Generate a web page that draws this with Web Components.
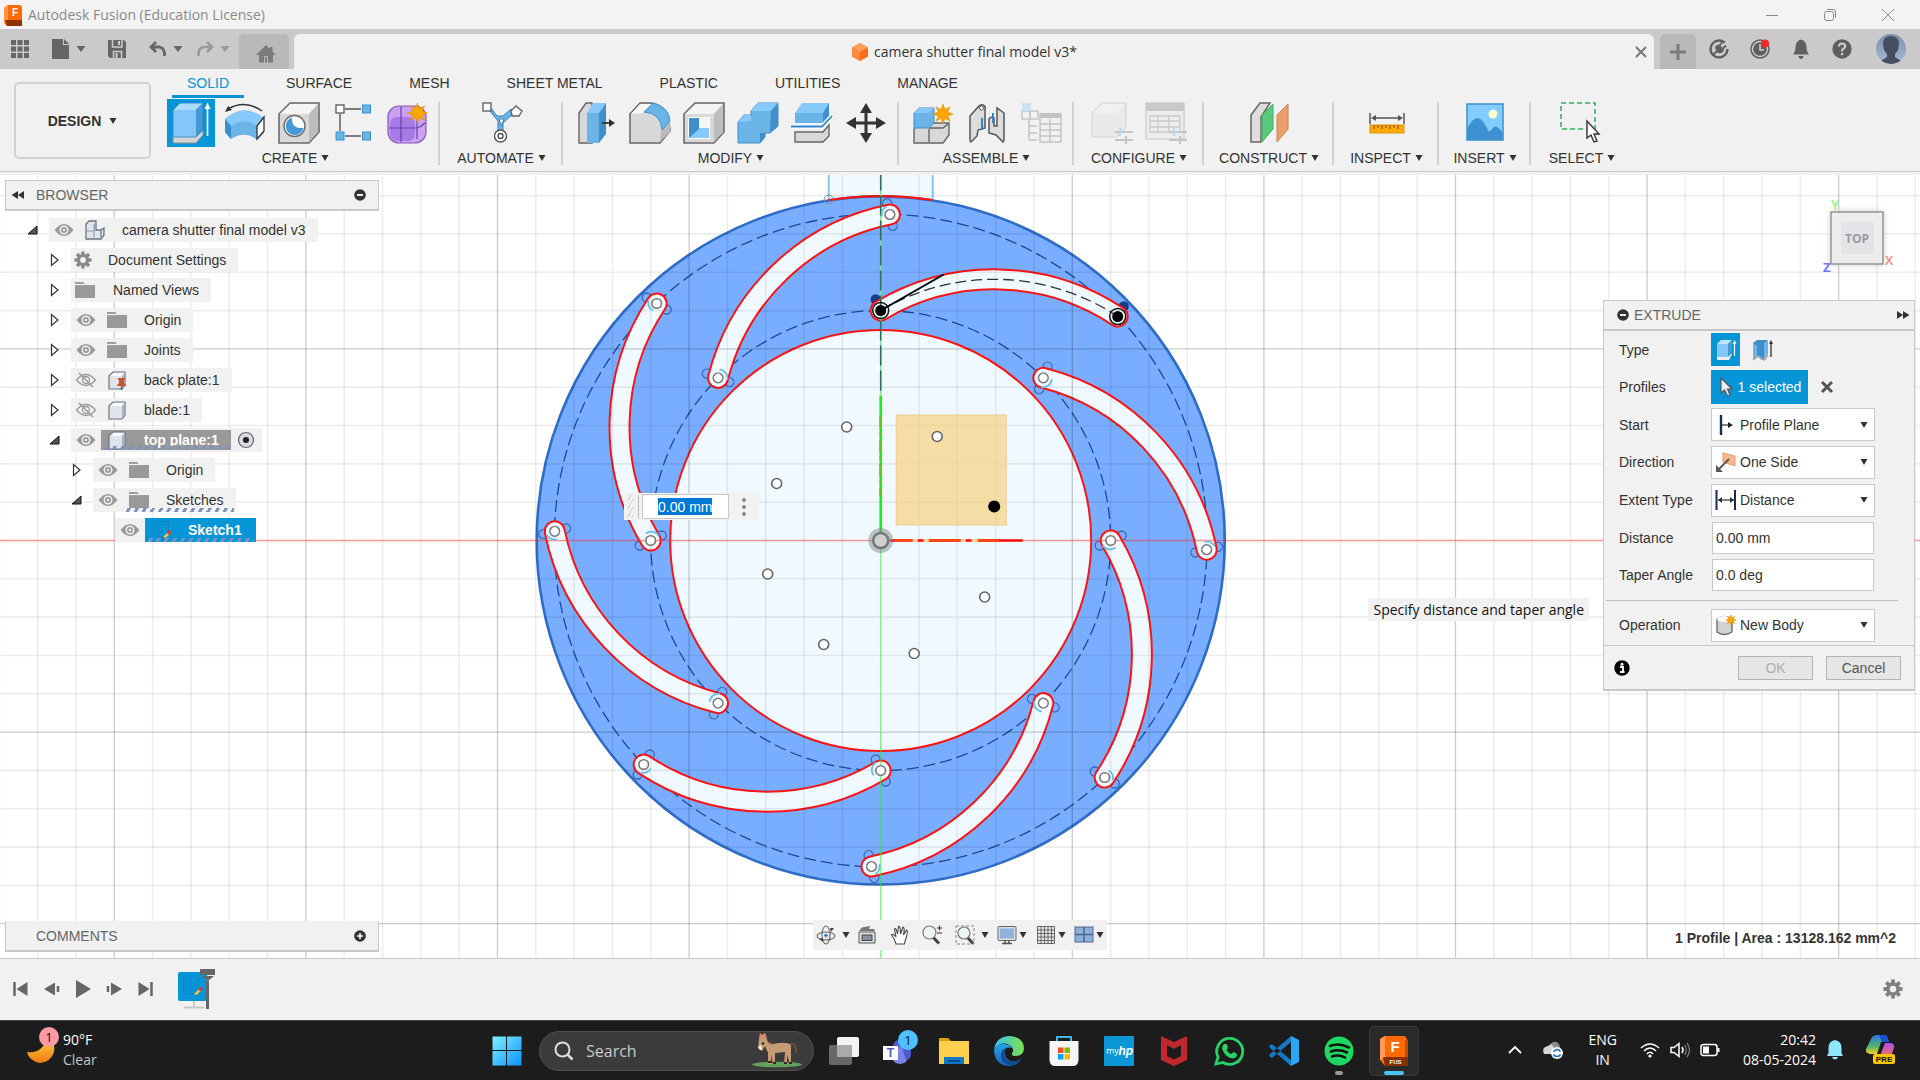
<!DOCTYPE html>
<html lang="en">
<head>
<meta charset="utf-8">
<title>Autodesk Fusion (Education License)</title>
<style>
html,body{margin:0;height:100%}
body{font:14px/20px "Liberation Sans",Arial,sans-serif;color:#333;background:#f1f1f1;overflow:hidden}
fx-app{height:100vh}
</style>
</head>
<body>
<fx-app></fx-app>
<script>
const star=(cx,cy,r,q=r*.5,n=8)=>{let p='';for(let i=0;i<n*2;i++){const a=i*Math.PI/n-Math.PI/2,k=i%2?q:r;p+=`${(cx+Math.cos(a)*k).toFixed(1)},${(cy+Math.sin(a)*k).toFixed(1)} `}return `<polygon points="${p}" fill="#f9a602" stroke="#e08f00" stroke-width=".6"/>`};
const gear=(c,r,col,hole)=>{let t='';for(let i=0;i<8;i++)t+=`<rect x="${c-r*.2}" y="${c-r}" width="${r*.4}" height="${r*.6}" transform="rotate(${i*45} ${c} ${c})"/>`;return `<g fill="${col}">${t}<circle cx="${c}" cy="${c}" r="${r*.72}"/></g><circle cx="${c}" cy="${c}" r="${r*.34}" fill="${hole}"/>`};
const cube='<path d="M4 15 15 4H44V33L34 44H4Z" fill="#d8d8d8" stroke="#6b6b6b" stroke-width="1.6"/><path d="M5 15 15.500 5H43L34 15Z" fill="#f4f4f4"/><path d="M34 15 43 5V33L34 43Z" fill="#bdbdbd"/>';
const sliders='<g stroke="#c4c4c4" stroke-width="2" fill="none"><path d="M27 33H45M27 41H45M38 37V45"/></g><path d="M32 28V37" stroke="#b5dcf5" stroke-width="2"/>';
const smallCube='<path d="M2 6 6 2H18V15L15 19H2Z" fill="#dfe4ec" stroke="#6d7480" stroke-width="1.200"/><path d="M3 6 6.500 3H17.500L15 6Z" fill="#f8fafc"/><path d="M15 6 17.500 3V15L15 18Z" fill="#aab2c0"/>';
const ICONS={
app:[22,22,'<path d="M2 4 6 1H18L20 3V20L18 22H5L2 19Z" fill="#ff6b00"/><path d="M2 4 6 1V17L2 19Z" fill="#ff9448"/><path d="M3 16H20V22H5Z" fill="#8f3200"/><text x="13" y="12" font-size="10" font-weight="700" fill="#fff" text-anchor="middle">F</text>'],
min:[16,16,'<path d="M2 8.500H14" stroke="#888" />'],
restore:[16,16,'<rect x="2.500" y="4.500" width="9" height="9" rx="2" fill="none" stroke="#888"/><path d="M5 2.500H11Q13.500 2.500 13.500 5V11" fill="none" stroke="#888"/>'],
close:[16,16,'<path d="M2 2 14 14M14 2 2 14" stroke="#888" />'],
closetab:[16,16,'<path d="M3 3 13 13M13 3 3 13" stroke="#777" stroke-width="2"/>'],
grid:[20,20,'<g fill="#666"><rect x="1" y="1" width="5" height="5"/><rect x="7.500" y="1" width="5" height="5"/><rect x="14" y="1" width="5" height="5"/><rect x="1" y="7.500" width="5" height="5"/><rect x="7.500" y="7.500" width="5" height="5"/><rect x="14" y="7.500" width="5" height="5"/><rect x="1" y="14" width="5" height="5"/><rect x="7.500" y="14" width="5" height="5"/><rect x="14" y="14" width="5" height="5"/></g>'],
file:[20,20,'<path d="M1 0H12V6H18V20H1Z" fill="#666"/><path d="M13 0 18 5H13Z" fill="#666"/>'],
save:[20,20,'<path d="M1 1H17L19 3V19H3L1 17Z" fill="#666"/><path d="M5.500 1V8H15V1M6.500 19V12.500H14.500V19" fill="none" stroke="#cbcbcb" stroke-width="1.500"/><rect x="11" y="2" width="2" height="4" fill="#cbcbcb"/><rect x="8.500" y="14" width="2" height="5" fill="#cbcbcb"/>'],
undo:[20,20,'<path d="M8 3 3 8 8 13M3.500 8H11Q17 8.500 16.500 17" fill="none" stroke="#666" stroke-width="2.800"/>'],
redo:[20,20,'<path d="M12 3 17 8 12 13M16.500 8H9Q3 8.500 3.500 17" fill="none" stroke="#999" stroke-width="2.500"/>'],
down:[10,10,'<path d="M0.500 2H9.500L5 8Z" fill="#666"/>'],
down2:[10,10,'<path d="M0.500 2H9.500L5 8Z" fill="#999"/>'],
drop:[8,8,'<path d="M0.500 1H7.500L4 7Z" fill="#333"/>'],
home:[20,20,'<path d="M10 1 0 11H3V18.500H8V12H12V18.500H17V11H20L16.500 7.500V3H14V5Z" fill="#7b7b7b"/><rect x="9.200" y="13" width="1.800" height="5.500" fill="#7b7b7b"/>'],
doc3d:[20,20,'<path d="M10 1 18 5.500V14.500L10 19 2 14.500V5.500Z" fill="#ff6a13"/><path d="M10 1 18 5.500 10 10 2 5.500Z" fill="#ff9c5e"/><path d="M10 10V19L2 14.500V5.500Z" fill="#f98943"/>'],
plus:[20,20,'<path d="M10 2V18M2 10H18" stroke="#7b7b7b" stroke-width="3"/>'],
ext:[20,20,'<circle cx="10" cy="10" r="8.500" fill="none" stroke="#5f5f5f" stroke-width="2.400" stroke-dasharray="46 7"/><path d="M3.500 16.500 8 12" stroke="#5f5f5f" stroke-width="2"/><path d="M6 9Q7 5 11 6L15 11Q13 15 9 14Z" fill="#5f5f5f"/><path d="M10 7 13 3.500M13.500 10 17 6.500" stroke="#5f5f5f" stroke-width="1.800"/>'],
clock:[20,20,'<circle cx="10" cy="10" r="9" fill="none" stroke="#5f5f5f" stroke-width="1.500"/><circle cx="10" cy="10" r="6.800" fill="#5f5f5f"/><path d="M10 5V11H14" stroke="#ccc" stroke-width="1.600" fill="none"/><circle cx="15" cy="4.500" r="4" fill="#ee2a2a"/>'],
bell:[20,20,'<path d="M10 0.500Q15.500 2 15.500 8 15.500 13 18 15.500H2Q4.500 13 4.500 8 4.500 2 10 .5ZM7.500 17H12.500Q12 20 10 20 8 20 7.500 17Z" fill="#5f5f5f"/>'],
help:[20,20,'<circle cx="10" cy="10" r="9.700" fill="#5f5f5f"/><path d="M7 7.500Q7 4.500 10 4.500 13.200 4.500 13.200 7.300 13.200 9 11 10 10 10.500 10 12.500" fill="none" stroke="#ccc" stroke-width="2.200"/><rect x="8.900" y="14" width="2.300" height="2.300" fill="#ccc"/>'],
avatar:[30,30,'<defs><clipPath id="c"><circle cx="15" cy="15" r="15"/></clipPath><linearGradient id="g" x2="0" y2="1"><stop stop-color="#7c8ea8"/><stop offset="1" stop-color="#a7b9d6"/></linearGradient></defs><g clip-path="url(#c)"><rect width="30" height="30" fill="url(#g)"/><path d="M7 10Q7 2 15 2 23 2 23 10L22 16Q21 18 19 20V23L27 28V30H3V28L11 23V20Q9 18 8 16Z" fill="#454f5f"/></g>'],
extrude:[48,48,'<path d="M6 38 13 31H36V36L29 44H6Z" fill="#d5d5d5" stroke="#8c8c8c"/><path d="M6 11V38H29V11Z" fill="#84c6f8"/><path d="M6 11 13 4H36L29 11Z" fill="#abdcff"/><path d="M29 11 36 4V31L29 38Z" fill="#4598d6"/><path d="M6 11V38H29L36 31V4H13Z" fill="none" stroke="#2c83c3" stroke-width=".8"/><path d="M40.500 37V8" stroke="#fff" stroke-width="1.600"/><path d="M37.500 10 40.500 3.500 43.500 10Z" fill="#fff"/>'],
revolve:[48,48,'<path d="M4 20Q23 4 43 20V34L36 41Q24 31 10 40L4 33Z" fill="#6ab4e8"/><path d="M4 20Q23 3 43 19L36 27Q23 18 10 27Z" fill="#86c9fa"/><path d="M4 20 10 27V40L4 33Z" fill="#3b8dcc"/><path d="M36 27 43 18V32L36 40Z" fill="#fff" stroke="#333" stroke-width="1.300"/><path d="M41 12Q24 0 7 10" fill="none" stroke="#333" stroke-width="1.500"/><path d="M4 13 7 7 11 11Z" fill="#333"/>'],
hole:[48,48,cube+'<circle cx="19.500" cy="27" r="10.500" fill="#fff" stroke="#6b6b6b" stroke-width="1.400"/><path d="M17 18.500A9 9 0 1 0 28.500 29Q16 30 17 18.500Z" fill="#4598d6"/>'],
pattern:[48,48,'<path d="M16 10H32M11 15V32M16 37H32" stroke="#555" stroke-width="1.400"/><rect x="7" y="6" width="8" height="8" fill="#fff" stroke="#555" stroke-width="1.300"/><g fill="#6ab4e8" stroke="#3b8dcc"><rect x="33.500" y="6" width="8" height="8"/><rect x="7" y="33" width="8" height="8"/><rect x="33.500" y="33" width="8" height="8"/></g>'],
form:[48,48,'<rect x="5" y="7" width="38" height="37" rx="11" fill="#caa2f2" stroke="#8659bd" stroke-width="1.200"/><rect x="7" y="18" width="25" height="24" rx="7" fill="#a77ae6"/><path d="M18 8V43M6 29H34Q38 28 42 24M34 16V40" stroke="#6d3fa8" stroke-width="1.200" fill="none"/>'+star(34.5,14,10)],
automate:[48,48,'<path d="M11 11 20 22V34H25V24L37 13 33 10 25 17H19L13 9Z" fill="#6ab4e8" stroke="#3b7fb5"/><path d="M21 20H26L23.500 27Z" fill="#fff" stroke="#3b7fb5"/><rect x="5" y="4" width="8" height="8" fill="#fff" stroke="#666" stroke-width="1.400"/><path d="M38 7 44 12 41 17 34 17 33 12Z" fill="#fff" stroke="#666" stroke-width="1.400"/><circle cx="22.500" cy="37" r="6" fill="#fff" stroke="#555" stroke-width="1.400"/><circle cx="22.500" cy="37" r="2.500" fill="none" stroke="#555" stroke-width="1.400"/>'],
press:[48,48,'<path d="M7 14 14 4H20V44H7Z" fill="#d8d8d8" stroke="#666" stroke-width="1.400"/><path d="M15 14V44H27V14Z" fill="#6ab4e8"/><path d="M15 14 21 4H34L27 14Z" fill="#86c9fa"/><path d="M27 14 34 4V35L27 44Z" fill="#3f8fcb"/><path d="M30 24H39" stroke="#333" stroke-width="1.800"/><path d="M37 20 43 24 37 28Z" fill="#333"/>'],
fillet:[48,48,'<path d="M4 15 14 4H26Q43 7 44 32L34 44H4Z" fill="#d8d8d8" stroke="#666" stroke-width="1.500"/><path d="M5 15 14 5H26L17 14Z" fill="#f6f6f6"/><path d="M35 32 44 22V33L34 43Z" fill="#bbb"/><path d="M18 13 27 4Q43 8 44 22L36 31Q35 14 18 13Z" fill="#6ab4e8" stroke="#3f8fcb"/>'],
shell:[48,48,cube+'<rect x="8" y="18" width="22" height="22" fill="#fff"/><rect x="9" y="19" width="20" height="20" fill="#86c9fa"/><path d="M9 19H19V30L9 39Z" fill="#3f8fcb"/><path d="M19 19H29V29H19Z" fill="#f4f4f4"/>'],
combine:[48,48,'<path d="M4 23 10 16H17V12L24 4H44V27L36 34H31V38L26 44H4Z" fill="#6ab4e8" stroke="#3f8fcb"/><path d="M17 12 24 4H44L37 12ZM4 23 10 16H17V22Z" fill="#86c9fa"/><path d="M37 12 44 4V27L36 34ZM26 34H31V38L26 44Z" fill="#3f8fcb"/>'],
split:[48,48,'<path d="M7 33H35L41 26V37L35 43H7Z" fill="#d8d8d8" stroke="#666" stroke-width="1.400"/><path d="M7 14H35V24H7Z" fill="#6ab4e8"/><path d="M7 14 14 4H41L35 14Z" fill="#86c9fa"/><path d="M35 14 41 4V17L35 24Z" fill="#3f8fcb"/><path d="M3 27.500H34L44 17" stroke="#fff" stroke-width="4" fill="none"/><path d="M3 27.500H34L44 17" stroke="#2f86d0" stroke-width="1.800" fill="none"/>'],
move:[48,48,'<path d="M24 9V39M9 24H39" stroke="#333" stroke-width="3"/><path d="M24 4 30 14H18ZM24 44 18 34H30ZM4 24 14 18V30ZM44 24 34 30V18Z" fill="#333"/>'],
newcomp:[48,48,'<path d="M5 30 12 24H40V36L34 44H5Z" fill="#d8d8d8" stroke="#666" stroke-width="1.400"/><path d="M20 30V43M20 29H34L39 25" stroke="#666" stroke-width="1.400" fill="none"/><path d="M5 14 10 9H25V24L20 29H5Z" fill="#6ab4e8" stroke="#3f8fcb"/><path d="M5 14 10 9H25L20 14Z" fill="#86c9fa"/>'+star(34,15,10)],
joint:[48,48,'<path d="M7 17 15 8Q17 5 20 6 23 7 22 11V29L15 31 14 37 8 43Q7 43 7 41Z" fill="#ddd" stroke="#555" stroke-width="1.500"/><circle cx="18.500" cy="9" r="2" fill="#fff" stroke="#555"/><path d="M41 14 34 9V27H31V19Q28 17 26 20V34L33 36 40 43 41 41Z" fill="#ddd" stroke="#555" stroke-width="1.500"/><path d="M19 19V31M30 14V24" stroke="#2f86d0" stroke-width="2"/>'],
bom:[48,48,'<g fill="none" stroke="#c2c2c2" stroke-width="1.400"><rect x="5" y="12" width="8" height="8"/><rect x="13" y="12" width="8" height="8"/><path d="M12 21V41M12 27H20M12 34H20M12 41H20"/><rect x="23" y="15" width="21" height="28"/><path d="M23 25H44M23 31H44M23 37H44M33 20V43"/></g><rect x="5" y="4" width="9" height="8" fill="#c9e3f5"/><rect x="23" y="14" width="21" height="5" fill="#c2c2c2"/>'],
conf1:[48,48,'<path d="M4 14 14 4H38V28L29 38H4Z" fill="#e9e9e9" stroke="#d6d6d6" stroke-width="1.200"/><path d="M5 14 14 5H37L29 14Z" fill="#f1f1f1"/>'+sliders],
conf2:[48,48,'<rect x="4" y="4" width="38" height="36" fill="#ededed" stroke="#cfcfcf" stroke-width="1.400"/><rect x="4" y="4" width="38" height="8" fill="#c9c9c9"/><path d="M8 17H38V33H8ZM8 22H38M8 28H38M16 17V33M27 17V33" fill="none" stroke="#c9c9c9" stroke-width="1.300"/>'+sliders],
construct:[48,48,'<path d="M6 16 15 4H25L16 18V43H6Z" fill="#ddd" stroke="#666" stroke-width="1.500"/><path d="M17 16 28 5V30L17 43Z" fill="#5ac97e" stroke="#3fae63"/><path d="M32 16 43 5V30L32 43Z" fill="#e99f6c" stroke="#cf8450"/>'],
inspect:[48,48,'<path d="M7 14V25M41 14V25M10 19H38" stroke="#555" stroke-width="1.500"/><path d="M8 19 13 16V22ZM40 19 35 16V22Z" fill="#555"/><rect x="7" y="26" width="34" height="8" fill="#fca70a" stroke="#e89400"/><path d="M11 26V30M15 26V29M19 26V30M23 26V29M27 26V30M31 26V29M35 26V30" stroke="#7a5000"/>'],
insert:[48,48,'<rect x="6" y="5" width="36" height="36" fill="#82ccff" stroke="#3c8fcd" stroke-width="1.500"/><path d="M6 30Q12 18 17 19 22 20 28 33L33 28Q36 26 42 34V41H6Z" fill="#3c92d0"/><circle cx="32" cy="15" r="4.500" fill="#fdfbd0"/>'],
select:[48,48,'<rect x="3" y="4" width="34" height="26" fill="none" stroke="#2fae5b" stroke-width="1.500" stroke-dasharray="5 3"/><path d="M29 22V39L33 36 36 43 39 42 36 35H41Z" fill="#fff" stroke="#333" stroke-width="1.400"/>'],
eye:[20,14,'<path d="M0.500 7Q10 -5 19.500 7 10 19 .5 7Z" fill="#999"/><circle cx="10" cy="7" r="4.500" fill="#f1f1f1"/><circle cx="10" cy="7" r="3" fill="#999"/><circle cx="10" cy="7" r="1.200" fill="#f1f1f1"/>'],
eyeoff:[20,14,'<path d="M0.500 7Q10 -4 19.500 7 10 18 .5 7Z" fill="none" stroke="#999" stroke-width="1.300"/><circle cx="10" cy="7" r="3.500" fill="none" stroke="#999" stroke-width="1.300"/><path d="M3 0 17 14" stroke="#999" stroke-width="1.500"/>'],
folder:[22,18,'<path d="M1 1H9L11 3V4H21V17H1Z" fill="#999"/><path d="M1 3.500H11" stroke="#f1f1f1" stroke-width="1.200"/>'],
gear:[18,18,gear(9,8.5,'#888','#f1f1f1')],
biggear:[20,20,gear(10,9.5,'#808080','#f1f1f1')],
asm:[20,20,'<path d="M1 4 4 1H11V10H16L19 8V15L16 19H1Z" fill="#dfe4ec" stroke="#6d7480" stroke-width="1.300"/><path d="M1 11H9V19" stroke="#8f97a5" fill="none"/><path d="M9.500 4V11M16 11V18" stroke="#9aa4b5" stroke-width="2"/>'],
body:[20,20,smallCube],
pinned:[20,20,smallCube+'<path d="M11 8H18V10H17V13L19.500 16H9.500L12 13V10H11Z" fill="#c9532c"/><path d="M14.500 16V20" stroke="#555" stroke-width="1.300"/>'],
sketch:[20,20,'<rect x="2.500" y="1.500" width="15" height="15" rx="1.500" fill="none" stroke="#1583bd" stroke-width="1.100"/><path d="M6 5H9M6 6V10Q7 14 11 12L14 5" fill="none" stroke="#1583bd"/><path d="M12 17 17 12 19 14 14.500 18Z" fill="#f7c343"/><circle cx="18" cy="12.500" r="2" fill="#e4323b"/><path d="M11 19.500 12 17 14 18.500Z" fill="#555"/>'],
open:[12,12,'<path d="M10 2V10H1Z" fill="#555" stroke="#111"/>'],
closed:[12,12,'<path d="M2.500 .5V11.500L9 6Z" fill="#fff" stroke="#333" stroke-width="1.200"/>'],
radio:[18,18,'<circle cx="9" cy="9" r="7.500" fill="#d7dbe2" stroke="#666" stroke-width="1.200"/><circle cx="9" cy="9" r="3" fill="#222"/>'],
rew:[14,10,'<path d="M0.500 5 7 1V9ZM7 5 13 1V9Z" fill="#333"/>'],
ffw:[14,10,'<path d="M13.500 5 7 1V9ZM7 5 1 1V9Z" fill="#333"/>'],
minus:[12,12,'<circle cx="6" cy="6" r="5.800" fill="#333"/><path d="M3 6H9" stroke="#fff" stroke-width="1.800"/>'],
add:[12,12,'<circle cx="6" cy="6" r="5.800" fill="#333"/><path d="M3 6H9M6 3V9" stroke="#fff" stroke-width="1.600"/>'],
info:[16,16,'<circle cx="8" cy="8" r="7.700" fill="#000"/><circle cx="8" cy="4.300" r="1.500" fill="#fff"/><path d="M6 7H9V12H10.500M6 12H10" stroke="#fff" stroke-width="1.800" fill="none"/>'],
typ1:[24,24,'<path d="M3 19 6 16H18L15 22H3Z" fill="#eee"/><path d="M3 6V19H14V6Z" fill="#84c6f8"/><path d="M3 6 7 2H18L14 6Z" fill="#c0e4ff"/><path d="M14 6 18 2V15L14 19Z" fill="#4598d6"/><path d="M20.500 18V4" stroke="#fff" stroke-width="1.200"/><path d="M18.500 6 20.500 2 22.500 6Z" fill="#fff"/>'],
typ2:[24,24,'<path d="M3 5 7 2H18L14 6V19L16 22H12L8 19 3 22Z" fill="#3f8fcb"/><path d="M3 5 7 8V18L3 21ZM14 6 18 2V16L14 20Z" fill="#6ab4e8"/><path d="M3 22 8 18 14 22 18 17" fill="none" stroke="#aaa" stroke-width="1.500"/><path d="M21 19V4" stroke="#333" stroke-width="1.300"/><path d="M19 6 21 2 23 6Z" fill="#333"/>'],
cursor:[16,22,'<path d="M3 2V17L6.500 14 9.500 20 12 19 9.500 13H14Z" fill="#eee" stroke="#555" stroke-width="1.200"/>'],
x:[14,14,'<path d="M2 2 12 12M12 2 2 12" stroke="#555" stroke-width="3"/>'],
start:[24,24,'<path d="M7 2V22" stroke="#142e57" stroke-width="2.400"/><path d="M8 12H15" stroke="#333" stroke-width="1.200"/><path d="M14 9 19 12 14 15Z" fill="#222"/>'],
dir:[24,24,'<path d="M9 3 21 6V16L9 12Z" fill="#f7b78d" stroke="#e59a69"/><path d="M15 9 4 20" stroke="#555" stroke-width="1.800"/><path d="M2 15V22H9Z" fill="#555"/>'],
dist:[24,24,'<path d="M2.500 2V22M21 2V22" stroke="#142e57" stroke-width="2"/><path d="M4 12H20" stroke="#333" stroke-width="1.200"/><path d="M4 12 8 9V15ZM20 12 16 9V15Z" fill="#333"/>'],
newbody:[24,24,'<path d="M3 6Q10 1 18 6V19Q10 24 3 19Z" fill="#d3d3d3" stroke="#666" stroke-width="1.300"/><ellipse cx="10" cy="6" rx="7" ry="3" fill="#fafafa"/>'+star(17,7,5)],
orbit:[20,20,'<ellipse cx="10" cy="10" rx="4" ry="9" fill="none" stroke="#666" stroke-width="1.100"/><ellipse cx="10" cy="11" rx="9" ry="4" fill="none" stroke="#666" stroke-width="1.100"/><path d="M8 10.500H12M10 8.500V12.500" stroke="#2277d2" stroke-width="1.300"/><path d="M14 3 18 3 15 7ZM3 14 7 13V17Z" fill="#444"/>'],
look:[20,20,'<path d="M2 7H18V18H2Z" fill="#e4e4e4" stroke="#555"/><rect x="5" y="10" width="10" height="5.500" fill="#8b919c" stroke="#444"/><path d="M2 6 5 2.500 13 1 12 4H17L18 6Z" fill="#777"/>'],
hand:[20,20,'<path d="M6 19Q5 14 1.500 10 3 8 6 12L4.500 4Q6 2 7.500 9L8.500 1.500Q10.500 .5 10.500 9L13 2Q15 2 13.500 10L16.500 5Q18.500 6 16 13 15 16 14.500 19Z" fill="#fff" stroke="#444" stroke-width="1.100"/>'],
zoom:[20,20,'<path d="M10 11 17 18.500" stroke="#444" stroke-width="3"/><circle cx="7.500" cy="7.500" r="6.500" fill="#eef4f4" stroke="#777" stroke-width="1.200"/><path d="M15 3H20M17.500 .5V5.500M15 8H20" stroke="#333"/>'],
fit:[20,20,'<rect x="1" y="1" width="18" height="18" fill="none" stroke="#888" stroke-dasharray="3 2"/><path d="M12 12 18 18.500" stroke="#444" stroke-width="3"/><circle cx="9" cy="8" r="6" fill="#eef4f4" stroke="#777" stroke-width="1.200"/>'],
screen:[20,20,'<rect x="1" y="1.500" width="18" height="14" rx="1" fill="#ddd" stroke="#666"/><rect x="3" y="3.500" width="14" height="10" fill="#8eb1de"/><path d="M8 15.500V18M12 15.500V18M5 18.500H15" stroke="#555" stroke-width="1.500"/>'],
gridv:[20,20,'<path d="M1.500 1.500H18.500V18.500H1.500ZM1.500 5H18.500M1.500 8.500H18.500M1.500 12H18.500M1.500 15.500H18.500M5 1.500V18.500M8.500 1.500V18.500M12 1.500V18.500M15.500 1.500V18.500" stroke="#666" fill="#e8e8e8" />'],
views:[20,20,'<rect x="1" y="2" width="18" height="15" fill="#8fb0da" stroke="#4f678b"/><path d="M10 2V17M1 9.500H19" stroke="#4f678b" stroke-width="1.500"/>'],
tfirst:[16,16,'<path d="M1.500 1V15" stroke="#666" stroke-width="2.500"/><path d="M14.500 1V15L3.500 8Z" fill="#666"/>'],
tprev:[16,16,'<path d="M11 1.500V14.500L0 8Z" fill="#666"/><path d="M14 5V11" stroke="#666" stroke-width="2.500"/>'],
tplay:[16,18,'<path d="M1 0V18L16 9Z" fill="#666"/>'],
tnext:[16,16,'<path d="M5 1.500V14.500L16 8Z" fill="#666"/><path d="M2 5V11" stroke="#666" stroke-width="2.500"/>'],
tlast:[16,16,'<path d="M14.500 1V15" stroke="#666" stroke-width="2.500"/><path d="M1.500 1V15L12.500 8Z" fill="#666"/>'],
marker:[48,44,'<rect x="4" y="5" width="29" height="29" rx="2" fill="#0696d7"/><g transform="translate(7 9)"><rect x="2.500" y="1.500" width="16" height="16" rx="1.500" fill="none" stroke="#1583bd" stroke-width="1.200"/><path d="M6 6H9M6 7V11Q7 15 11 13L15 6" fill="none" stroke="#1583bd"/><path d="M13 18 18 13 20 15 15.500 19Z" fill="#f7c343"/><circle cx="19.500" cy="13" r="2" fill="#e4323b"/></g><path d="M20 34V40M10 40.500H30" stroke="#c8c8c8" stroke-width="2"/><rect x="26" y="2" width="15" height="6" fill="#666"/><path d="M28 9H40L34 14Z" fill="#666"/><path d="M33.500 14V42" stroke="#666" stroke-width="3"/>'],
moon:[40,40,'<defs><linearGradient id="m" x2="0" y2="1"><stop stop-color="#ffd23c"/><stop offset="1" stop-color="#ee7b16"/></linearGradient></defs><path d="M4 22Q20 24 24 7 33 13 31 22 28 32 17 33 6 31 4 22Z" fill="url(#m)"/><circle cx="26" cy="7" r="10" fill="#ff9aa5"/><text x="26" y="12" font-size="13" text-anchor="middle" fill="#111" font-family="Open Sans">1</text>'],
win:[30,30,'<defs><linearGradient id="w" x2="1" y2="1"><stop stop-color="#7df0ff"/><stop offset="1" stop-color="#0a93ff"/></linearGradient></defs><path d="M0.500 .5H14V14H.5ZM15 .5H29.500V14H15ZM.5 15H14V29.500H.5ZM15 15H29.500V29.500H15Z" fill="url(#w)"/>'],
search:[20,20,'<circle cx="8.500" cy="8.500" r="7" fill="none" stroke="#ddd" stroke-width="2"/><path d="M13.500 13.500 18.500 18.500" stroke="#ddd" stroke-width="2.500"/>'],
donkey:[52,36,'<ellipse cx="26" cy="31.500" rx="25" ry="2.800" fill="#63a15e"/><path d="M17 19V31H20V22L22 31H24V20L34 19 33 31H36L36 22 39 31H40L40 12Q36 8 22 11L16 5 14 0 11 2 9 0 8 6 7 15 11 18 14 13 16 18Z" fill="#c59b75"/><path d="M9 1 11 5M14 1 13 5" stroke="#e87c68" stroke-width="1.500"/><path d="M15 4Q20 8 22 12L17 9Z" fill="#4b3424"/><circle cx="12" cy="10.500" r="1.200" fill="#222"/><path d="M7 14 9 17 11 17 10 12Z" fill="#eee"/><path d="M39 11Q45 9 45 20" fill="none" stroke="#7b523b" stroke-width="1.500"/><path d="M17 29H21M22 30H25M33 30H36M38 30H41" stroke="#382820" stroke-width="2"/>'],
task:[30,30,'<rect x="0" y="9" width="23" height="20" rx="2" fill="#686868"/><rect x="8" y="1" width="22" height="20" rx="2" fill="#f4f4f4"/><rect x="8" y="9" width="15" height="12" fill="#aaa"/>'],
teams:[38,36,'<circle cx="19" cy="13" r="6" fill="#5059c9"/><path d="M12 14H28V23Q28 30 20 31 12 30 12 23Z" fill="#7b83eb"/><path d="M22 14H31V22Q30 27 26 27Z" fill="#5059c9"/><rect x="3" y="13" width="15" height="14" fill="#fff"/><text x="10.500" y="24" font-size="12" font-weight="700" text-anchor="middle" fill="#5059c9">T</text><circle cx="28" cy="7" r="10" fill="#4cc2ff"/><text x="28" y="12" font-size="13" text-anchor="middle" fill="#111" font-family="Open Sans">1</text>'],
files:[30,30,'<path d="M0 2H9L13 6V12H0Z" fill="#e0a100"/><path d="M0 5H30V28H0Z" fill="#ffd04c"/><path d="M5 21H25V28H5Z" fill="#1276c9"/><path d="M9 25H21" stroke="#0b4c8f" stroke-width="2"/>'],
edge:[30,30,'<defs><linearGradient id="e" x2="1"><stop stop-color="#35c1f1"/><stop offset="1" stop-color="#7fe04f"/></linearGradient><linearGradient id="e2" x2="0" y2="1"><stop stop-color="#2aa5e6"/><stop offset="1" stop-color="#0f5fc2"/></linearGradient></defs><path d="M0 15Q2 8 9 8 15 8 18 12 12 10 10.500 15 10 22 16 25 22 27 28 22 23 30 15 30 1 29 0 15Z" fill="url(#e2)"/><path d="M10.500 15Q9 20 13 24 19 29 28 22 24 28 17 29.500 8 28 7 20 7 13 14 11 11 12 10.500 15Z" fill="#114a8b"/><path d="M0 14Q2 0 16 0 30 1 30 13 29 20 22 20 17 20 18 17 20 15 18.500 12 15 7 9 7.500 3 8 0 14Z" fill="url(#e)"/>'],
store:[30,32,'<path d="M8 8V2H22V8" fill="none" stroke="#39b5ec" stroke-width="2"/><path d="M0.500 6H29.500V25Q29 31 24 31H6Q1 31 .5 25Z" fill="#f5f5f5"/><rect x="9" y="12.500" width="5.500" height="5.500" fill="#f25022"/><rect x="15.500" y="12.500" width="5.500" height="5.500" fill="#7fba00"/><rect x="9" y="19" width="5.500" height="5.500" fill="#00a4ef"/><rect x="15.500" y="19" width="5.500" height="5.500" fill="#ffb900"/>'],
hp:[30,30,'<rect width="30" height="30" rx="1" fill="#0b96d6"/><text x="2" y="18" font-size="9" fill="#fff" font-family="Open Sans">my</text><text x="14.500" y="19" font-size="12" font-style="italic" font-weight="700" fill="#fff">hp</text>'],
mcafee:[30,30,'<path d="M2 0 15 6 28 0V24L15 30 2 24Z" fill="#c1282d"/><path d="M8 9 15 13 22 9V20L15 23.500 8 20Z" fill="#1c1c1c"/>'],
whats:[30,30,'<path d="M2 28 4 21A13 13 0 1 1 9 26.500Z" fill="none" stroke="#25d366" stroke-width="2.800"/><path d="M10 8 12.500 8 14 12 12.500 14Q14.500 17.500 17.500 18L19.500 16 23 18Q23 22 19 22.500 12 22 8.500 14 7.500 10 10 8Z" fill="#25d366"/>'],
code:[30,30,'<path d="M0 10 3 8 22 24V30L1 12ZM0 20 3 22 22 6V0L1 18Z" fill="#1479c4"/><path d="M22 0 30 4V26L22 30Z" fill="#2ba6f2"/>'],
spot:[30,30,'<circle cx="15" cy="15" r="14.500" fill="#1ed760"/><path d="M6 10Q15 6.500 25 11.500M7 15.500Q15 12.500 23 16.500M8 20.500Q15 18 21 21.500" fill="none" stroke="#111" stroke-width="2.600" stroke-linecap="round"/>'],
fus:[30,32,'<path d="M1 4 6 1H26L29 6V31H6L1 25Z" fill="#ff6b00"/><path d="M1 4 6 1V22L1 25Z" fill="#ff9b5b"/><path d="M4 22H29V31H6Z" fill="#853000"/><path d="M26 5H29V22H26Z" fill="#c24d00"/><text x="16" y="17" font-size="15" font-weight="700" fill="#fff" text-anchor="middle">F</text><text x="16.500" y="29" font-size="6" font-weight="700" fill="#fff" text-anchor="middle">FUS</text>'],
chev:[16,16,'<path d="M2 11 8 5 14 11" fill="none" stroke="#fff" stroke-width="1.800"/>'],
cloud:[22,20,'<path d="M7 13Q4 6 11 2 17 1 18 7V13Z" fill="#8a8a8a"/><path d="M2 14Q-1 7 6 6 10 2 12 8L12 14Z" fill="#d6d6d6"/><circle cx="15" cy="13" r="6" fill="#fff"/><path d="M11.500 12A4 4 0 0 1 18.500 11.500M18.500 14.500A4 4 0 0 1 11.500 14.500" fill="none" stroke="#1676c4" stroke-width="1.600"/>'],
wifi:[20,16,'<path d="M1 6Q10-2 19 6M4 9Q10 3 16 9M7 12Q10 8.500 13 12" fill="none" stroke="#fff" stroke-width="1.600"/><circle cx="10" cy="14" r="1.600" fill="#fff"/>'],
vol:[20,16,'<path d="M1 5.500H4L9 1.500V14.500L4 10.500H1Z" fill="none" stroke="#fff" stroke-width="1.500"/><path d="M12 5Q14 8 12 11" fill="none" stroke="#fff" stroke-width="1.500"/><path d="M14.500 3Q18 8 14.500 13M17 1Q22 8 17 15" fill="none" stroke="#777" stroke-width="1.300"/>'],
batt:[20,16,'<rect x="1" y="2.500" width="16" height="11" rx="2.500" fill="none" stroke="#fff" stroke-width="1.500"/><rect x="3" y="4.500" width="6" height="7" fill="#fff"/><path d="M18.500 6V10" stroke="#fff" stroke-width="2"/>'],
tbell:[18,20,'<path d="M9 0Q15.500 1 15.500 8V13L17 16H1L2.500 13V8Q2.500 1 9 0ZM6 17H12Q11 19.500 9 19.500 7 19.500 6 17Z" fill="#8fe6ff"/>'],
pilot:[32,30,'<defs><linearGradient id="p" x2="0" y2="1"><stop stop-color="#2a7be4"/><stop offset=".6" stop-color="#52b36a"/><stop offset="1" stop-color="#fbd02e"/></linearGradient><linearGradient id="q" x2="0" y2="1"><stop stop-color="#a552e6"/><stop offset="1" stop-color="#fb6a72"/></linearGradient></defs><path d="M7 2Q9 0 12 0H20Q22 0 23 4L24 7H16L12 19H5Q0 18 1 14Z" fill="url(#p)"/><path d="M14 0H20Q22 0 23 4L24 7H17Z" fill="#1b4fd3"/><path d="M20 8H26Q30 9 29 13L26 21H15Z" fill="url(#q)"/><rect x="8" y="19" width="22" height="10" rx="2" fill="#ffc400"/><text x="19" y="27" font-size="8" font-weight="700" text-anchor="middle" fill="#111">PRE</text>']
};
const def=(tag,css,html,after)=>{
  const t=document.createElement('template');
  t.innerHTML=`<style>:host{display:block;box-sizing:border-box}*{box-sizing:border-box}button,input,select{font:inherit;color:inherit;margin:0;padding:0;border:0;background:none}button{display:flex;align-items:center;justify-content:center}${css}</style>${html}`;
  customElements.define(tag,class extends HTMLElement{
    constructor(){super();this.attachShadow({mode:'open'}).append(t.content.cloneNode(true))}
    connectedCallback(){if(after&&!this.done){this.done=true;after(this,this.shadowRoot)}}
  });
};
const ic=n=>`<fx-icon name="${n}"></fx-icon>`;
def('fx-icon',':host{display:inline-block;flex:none}svg{display:block;overflow:visible;font-family:"Liberation Sans",sans-serif}','<span></span>',(h,r)=>{
  const [w,ht,s]=ICONS[h.getAttribute('name')];
  r.querySelector('span').innerHTML=`<svg width="${w}" height="${ht}" viewBox="0 0 ${w} ${ht}" aria-hidden="true">${s}</svg>`;
});
def('fx-titlebar',':host{display:flex;align-items:center;height:29px;padding:0 24px 0 2px;gap:4px;background:#f3f3f3;color:#8a8a8a;font:14px/20px "Open Sans",sans-serif}span{flex:1}button{width:16px;height:16px}nav{display:flex;gap:42px}',
 `${ic('app')}<span>Autodesk Fusion (Education License)</span><nav><button aria-label="Minimize">${ic('min')}</button><button aria-label="Restore">${ic('restore')}</button><button aria-label="Close">${ic('close')}</button></nav>`);
def('fx-tabbar',`:host{display:flex;height:40px;background:#cacaca;padding-top:5px}
.l,.r,.p,.q{display:flex;align-items:center}.l{gap:21px;padding:0 9px 5px 10px}.p{gap:5px}.q{gap:12px}
.home{width:50px;background:#b9b9b9;border-radius:5px 5px 0 0;padding:4px 0 0 4px}
.doc{flex:1;margin:0 6px 0 5px;background:#f1f1f1;border-radius:6px 6px 0 0;display:flex;align-items:center;padding-right:5px;font:14px/20px "Open Sans",sans-serif;color:#333}
.doc div{flex:1;display:flex;gap:4px;justify-content:center;align-items:center}
.new{width:36px;background:#b9b9b9;border-radius:5px 5px 0 0}.r{gap:21px;padding:0 14px 5px 13px}.r>:last-child{margin-left:3px}`,
 `<div class="l"><button aria-label="Data panel">${ic('grid')}</button><button class="p" aria-label="File">${ic('file')}${ic('down')}</button><button aria-label="Save">${ic('save')}</button><div class="q"><button class="p" aria-label="Undo">${ic('undo')}${ic('down')}</button><button class="p" aria-label="Redo">${ic('redo')}${ic('down2')}</button></div></div>
 <button class="home" aria-label="Home">${ic('home')}</button><div class="doc"><div>${ic('doc3d')}<span>camera shutter final model v3*</span></div><button aria-label="Close tab">${ic('closetab')}</button></div><button class="new" aria-label="New">${ic('plus')}</button>
 <div class="r">${['ext','clock','bell','help'].map(n=>`<button aria-label="${n}">${ic(n)}</button>`).join('')}<button aria-label="Account">${ic('avatar')}</button></div>`);
def('fx-group',`:host{display:flex;flex-direction:column;align-items:center;justify-content:space-between;width:var(--w);position:relative;height:69px}
:host(:not([last]))::after{content:"";position:absolute;right:0;top:3px;bottom:3px;width:2px;background:#d0d0d0}
.i{display:flex}.i button{width:54px;height:48px}.i button.on{background:#0696d7;width:48px;margin:0 3px 0 9px}.t{gap:4px;height:20px;white-space:nowrap}`,
 `<div class="i"></div><button class="t"><slot></slot>${ic('drop')}</button>`,(h,r)=>{
  r.querySelector('.i').innerHTML=h.getAttribute('icons').split(' ').map(n=>`<button class="${n==='extrude'?'on':''}" aria-label="${n}">${ic(n)}</button>`).join('');});
def('fx-ribbon',`:host{display:flex;height:106px;background:#f1f1f1;padding-left:14px;border-bottom:3px solid #f1f1f1;box-shadow:inset 0 -1px #c8c8c8}
.d{width:137px;height:77px;margin-top:13px;border:2px solid #d2d2d2;border-radius:5px;font-weight:700;gap:8px}
.tabs{display:flex;gap:27px;margin-left:21px;height:30px}.tabs button{padding:2px 15px 0;height:29px;border-bottom:3px solid transparent}.tabs .on{color:#0696d7;border-color:#0696d7}
.g{display:flex}`,
 `<button class="d">DESIGN${ic('drop')}</button><div><div class="tabs"><button class="on">SOLID</button><button>SURFACE</button><button>MESH</button><button>SHEET METAL</button><button>PLASTIC</button><button>UTILITIES</button><button>MANAGE</button></div>
 <div class="g">${[['CREATE','extrude revolve hole pattern form',289],['AUTOMATE','automate',123],['MODIFY','press fillet shell combine split move',336],['ASSEMBLE','newcomp joint bom',175],['CONFIGURE','conf1 conf2',130],['CONSTRUCT','construct',130],['INSPECT','inspect',105],['INSERT','insert',92],['SELECT','select',102]].map(([t,i,w])=>`<fx-group icons="${i}" style="--w:${w}px"${t==='SELECT'?' last':''}>${t}</fx-group>`).join('')}</div></div>`);
def('fx-sketch',':host{height:100%}svg{display:block;width:100%;height:100%}','<div style="height:100%"></div>',(h,r)=>{
 const arc='M0 -230A223 223 0 0 1 237 -224';
 let slots='',marks='';
 for(let i=0;i<8;i++){const t=`transform="rotate(${i*45})"`;
  slots+=`<g ${t} fill="none" stroke-linecap="round"><g stroke="${i?'#3869b4':'#123f87'}" stroke-width="1.300"${i?'':' fill="#123f87"'}><circle cx="-5" cy="-241" r="4.500"/><circle cx="243" cy="-234" r="4.500"/>${i?'<circle cx="5" cy="-219" r="4.500"/><circle cx="231" cy="-214" r="4.500"/>':''}</g><path d="${arc}" stroke="#fb1414" stroke-width="22"/><path d="${arc}" stroke="#f0f9ff" stroke-width="18"/></g>`;
  if(i)marks+=`<g ${t} fill="none"><path d="M7 -235A9 9 0 0 1 5 -222M230 -228A9 9 0 0 1 240 -232" stroke="#62c0ea" stroke-width="1.800"/><g fill="#fff" stroke="#777" stroke-width="1.600"><circle cy="-230" r="4.800"/><circle cx="237" cy="-224" r="4.800"/></g></g>`;}
 const holes=[[-34,-113.5],[56.5,-104],[-104,-57],[-113,33.5],[104,56.5],[-57,104],[33.5,113]].map(p=>`<circle cx="${p[0]}" cy="${p[1]}" r="5"/>`).join('');
 let lines='';for(let i=-40;i<=40;i++){if(!i)continue;const m=i%5===0,x=(i*38.32).toFixed(1);lines+=`<path d="M${x} -900V900M-1600 ${x}H1600" stroke="#000" stroke-opacity="${m?.2:.07}" stroke-width="${m?1.3:1.6}"/>`;}
 r.querySelector('div').innerHTML=`<svg viewBox="0 175 1920 783" preserveAspectRatio="xMidYMid slice" role="img" aria-label="Sketch"><rect y="-200" width="1920" height="1600" fill="#fff"/><g transform="translate(880.7 540.5)">
 <rect x="-52" y="-380" width="104" height="60" fill="#f0f9ff"/><path d="M-52 -380V-341M52 -380V-341" stroke="#7cc4e8" stroke-width="1.800"/>
 <circle r="344" fill="#78adff" stroke="#2e6cc8" stroke-width="2.600"/><path d="M-52 -340.500A344.500 344.500 0 0 1 52 -340.500" fill="none" stroke="#fb1414" stroke-width="2.200"/><circle cx="-52" cy="-341" r="4.500" fill="none" stroke="#888"/>
 <circle r="210.500" fill="#f0f9ff" stroke="#fb1414" stroke-width="2"/>
 <g fill="none" stroke="#1b4a94" stroke-width="1.300" stroke-dasharray="12 5"><circle r="230"/><circle r="326.500"/></g>
 ${slots}
 ${lines}
 <path d="M-1600 0H1600" stroke="#f33" stroke-opacity=".5" stroke-width="1.500"/><path d="M0 0V500" stroke="#2bec2b" stroke-opacity=".55" stroke-width="1.500"/><path d="M0 -370V-145" stroke="#7fe39a" stroke-width="1.400"/><path d="M0 -370V-145" stroke="#2e6e5c" stroke-width="1.600" stroke-dasharray="20 5"/>
 ${marks}
 <path d="${arc}" fill="none" stroke="#333" stroke-width="1.300" stroke-dasharray="11 5"/><path d="M0 -230 63 -266" stroke="#000" stroke-width="2"/>
 <g fill="none" stroke="#111" stroke-width="1.500"><circle cy="-230" r="8"/><circle cx="237" cy="-224" r="8"/></g><circle cy="-230" r="5.500"/><circle cx="237" cy="-224" r="5.500"/>
 <rect x="15.500" y="-125.500" width="110" height="110" fill="#f9ce7a" fill-opacity=".68" stroke="#efce92"/>
 <g fill="#fff" stroke="#666" stroke-width="1.600">${holes}</g><circle cx="113.500" cy="-34" r="6"/>
 <path d="M0 -145V-8" stroke="#11f311" stroke-width="2.600"/><path d="M0 -125V-45" stroke="#55d011" stroke-width="2.600" stroke-dasharray="13 4 3 4"/><path d="M9 0H32M37 0H43M48 0H80M85 0H91M97 0H142" stroke="#f90b0b" stroke-width="2.600"/><path d="M14 0H32M48 0H80M97 0H118" stroke="#ff4a0a" stroke-width="2.600"/><path d="M32 0H37M43 0H48M80 0H85M91 0H97" stroke="#fbd08a" stroke-width="2.600"/>
 <circle r="12.500" fill="#7d8a8e" fill-opacity=".5"/><circle r="7.500" fill="#d0d0d0" stroke="#777" stroke-width="2.500"/></g></svg>`;});
def('fx-head',':host{display:flex;align-items:center;height:31px;padding:0 12px 0 5px;background:#f1f1f1;border:1px solid #c8c8c8;border-bottom-width:2px;color:#666}span{flex:1;margin-left:var(--g,11px)}',
 '<button class="a"></button><span><slot></slot></span><button class="b"></button>',(h,r)=>{const a=h.getAttribute('left'),b=h.getAttribute('right');r.querySelector('.a').innerHTML=a?ic(a):'';if(!a)r.querySelector('.a').remove();r.querySelector('.b').innerHTML=ic(b)});
def('fx-row',`:host{display:flex;align-items:center;height:30px;padding-left:calc(22px + var(--d)*22px)}
.tg{width:12px;margin-right:10px}.box{display:flex;align-items:center;height:24px;background:#f1f1f1}
.e{width:30px}.in{display:flex;align-items:center;height:24px;padding-right:12px;position:relative}.ic{width:31px}.lab{padding-left:12px;white-space:nowrap}
.dark,.sel{color:#fff;font-weight:700}.dark{background:#999;height:20px}.sel{background:#0696d7;padding-right:14px}
.hatch::after{content:"";position:absolute;left:0;right:2px;bottom:0;height:4px;background:repeating-linear-gradient(120deg,transparent 0 4px,#7c92c0 4px 7px)}
.w .ic{width:27px}.w .lab{padding-left:15px}.gear .ic{width:23px}.gear .lab{padding-left:14px}.rad{width:31px}`,
 '<button class="tg"></button><div class="box"></div>',(h,r)=>{
  const g=n=>h.getAttribute(n),eye=g('eye');r.querySelector('.tg').innerHTML=g('tg')?ic(g('tg')):'';
  r.querySelector('.box').innerHTML=`${eye?`<button class="e" aria-label="Visibility">${ic(eye)}</button>`:''}<div class="in ${g('k')||''}"><button class="ic" tabindex="-1">${ic(g('icon'))}</button><span class="lab"><slot></slot></span></div>${g('radio')!=null?`<button class="rad" aria-label="Activate">${ic('radio')}</button>`:''}`;});
def('fx-browser','',
 `<fx-head left="rew" right="minus">BROWSER</fx-head><div style="padding-top:4px">${[[0,'open','eye','asm','','camera shutter final model v3'],[1,'closed','','gear','gear','Document Settings'],[1,'closed','','folder','w','Named Views'],[1,'closed','eye','folder','','Origin'],[1,'closed','eye','folder','','Joints'],[1,'closed','eyeoff','pinned','','back plate:1'],[1,'closed','eyeoff','body','','blade:1'],[1,'open','eye','body','dark hatch','top plane:1'],[2,'closed','eye','folder','','Origin'],[2,'open','eye','folder','hatch','Sketches'],[3,'','eye','sketch','sel hatch','Sketch1']].map(([d,t,e,i,k,l])=>`<fx-row style="--d:${d}" tg="${t}" eye="${e}" icon="${i}" k="${k}"${k.startsWith('dark')?' radio':''}>${l}</fx-row>`).join('')}</div>`);
const sel=(id,l,i,v)=>`<label for="${id}">${l}</label><div class="s">${ic(i)}<select id="${id}"><option>${v}</option></select><fx-icon class="ar" name="drop"></fx-icon></div>`;
def('fx-extrude',`:host{background:#f1f1f1;border:1px solid #c8c8c8;border-bottom-width:2px}
fx-head{--g:5px;height:30px;border-width:0 0 2px;padding:0 4px 0 13px}
.g{display:grid;grid-template-columns:92px 164px;grid-template-rows:repeat(7,1fr);height:263px;align-items:center;padding-left:15px}
.o{display:grid;grid-template-columns:92px 164px;align-items:center;height:44px;padding:4px 0 0 15px}
hr{margin:6px 16px 0 2px;border:0;border-top:1px solid #bdbdbd}
.s{display:flex;align-items:center;position:relative;background:#fff;border:1px solid #c8c8c8;height:33px;padding-left:2px}
.s>fx-icon{position:absolute;pointer-events:none}.s .ar{right:6px}select{appearance:none;width:100%;height:31px;padding-left:26px}
input{width:162px;height:32px;margin-left:1px;background:#fff;border:1px solid #c8c8c8;padding-left:3px}
.ty,.pr{display:flex;align-items:center}.ty{gap:7px}.ty button{width:29px;height:33px}.ty .on,.pr .c{background:#0696d7}.pr{gap:12px}.pr .c{width:97px;height:34px;color:#fff;gap:4px}
.f{display:flex;align-items:center;height:44px;border-top:1px solid #c8c8c8;padding:0 13px 0 10px;gap:13px;color:#555}.f span{flex:1;display:flex}.f button{width:75px;height:24px;border:1px solid #b4b4b4;background:#e6e6e6}.f .dis{color:#b0b0b0}`,
 `<fx-head left="minus" right="ffw">EXTRUDE</fx-head><div class="g"><span>Type</span><div class="ty"><button class="on" aria-label="Extrude">${ic('typ1')}</button><button aria-label="Thin extrude">${ic('typ2')}</button></div>
 <span>Profiles</span><div class="pr"><button class="c">${ic('cursor')}1 selected</button><button aria-label="Clear">${ic('x')}</button></div>${sel('a','Start','start','Profile Plane')}${sel('b','Direction','dir','One Side')}${sel('c','Extent Type','dist','Distance')}
 <label for="d">Distance</label><input id="d" value="0.00 mm"><label for="e">Taper Angle</label><input id="e" value="0.0 deg"></div><hr><div class="o">${sel('f','Operation','newbody','New Body')}</div>
 <div class="f"><span>${ic('info')}</span><button class="dis">OK</button><button>Cancel</button></div>`);
def('fx-float',':host{display:flex;align-items:center;width:135px;height:27px;background:#f1f1f1}i{width:14px;height:23px;margin:0 3px 0 1px;border-right:1px solid #bbb;background:repeating-linear-gradient(120deg,transparent 0 3px,#d0d0d0 3px 4px) 2px 0/6px 100% no-repeat}input{width:87px;height:25px;border:1px solid #c8c8c8;color:#fff;padding-left:15px;background:linear-gradient(#0078d7,#0078d7) 15px 3px/54px 17px no-repeat #fff}button{flex:1;height:27px;flex-direction:column;gap:3px}b{width:4px;height:4px;border-radius:2px;background:#888}',
 '<i></i><input aria-label="Distance" value="0.00 mm"><button aria-label="More"><b></b><b></b><b></b></button>');
def('fx-nav',':host{display:flex;align-items:center;height:30px;background:#f1f1f1;padding:0 3px}button{height:30px;gap:var(--a,6px);margin-right:var(--m)}',
 [['orbit',1,7],['look',0,13],['hand',0,12],['zoom',0,13],['fit',1,8],['screen',1,9],['gridv',1,8],['views',1,0]].map(([n,d,m])=>`<button aria-label="${n}" style="--m:${m}px;--a:${n==='orbit'||n==='fit'?6:2}px">${ic(n)}${d?ic('drop'):''}</button>`).join(''));
def('fx-cube',':host{width:76px;height:84px}svg{display:block}','<svg width="76" height="84" font-family="Open Sans" font-weight="700"><rect x="14" y="17" width="52" height="52" fill="#ededed" stroke="#888" stroke-width="1.300" filter="drop-shadow(0 0 3px #ccc)"/><rect x="24" y="27" width="33" height="32" fill="#e3e4e7"/><text x="40" y="48" font-size="12" text-anchor="middle" fill="#999ca1">TOP</text><text x="14" y="15" font-size="14" fill="#8df58d" font-weight="600">Y</text><text x="68" y="70" font-size="13" fill="#ff8080" font-weight="600">X</text><text x="6" y="77" font-size="13" fill="#7474ff">Z</text></svg>');
def('fx-stage',`:host{position:relative;flex:1;min-height:0;overflow:hidden;border-bottom:1px solid #c8c8c8}:host>*{position:absolute}fx-sketch{inset:0}
fx-browser{left:5px;top:5px;width:374px}.com{left:5px;bottom:6px;width:374px;padding-left:30px;--g:0px;border-top:0}fx-extrude{right:5px;top:125px;width:312px}
fx-float{left:calc(50% - 336px);top:318px}fx-nav{left:calc(50% - 147px);bottom:8px}fx-cube{right:27px;top:20px}
.tip{right:331px;top:423px;height:23px;padding:0 5px;background:#f1f1f1;color:#111;font:14px/23px "Open Sans",sans-serif}.st{right:24px;bottom:10px;font-weight:700}`,
 '<fx-sketch></fx-sketch><fx-browser></fx-browser><fx-head class="com" right="add">COMMENTS</fx-head><fx-float></fx-float><div class="tip">Specify distance and taper angle</div><fx-cube></fx-cube><fx-extrude></fx-extrude><fx-nav></fx-nav><div class="st">1 Profile | Area : 13128.162 mm^2</div>');
def('fx-timeline',':host{display:flex;align-items:center;height:61px;background:#f1f1f1;padding:0 17px 2px 13px;gap:15px}.m{margin-left:6px}.g{margin-left:auto}',
 ['tfirst','tprev','tplay','tnext','tlast'].map(n=>`<button aria-label="${n}">${ic(n)}</button>`).join('')+`<button class="m" aria-label="Sketch1">${ic('marker')}</button><button class="g" aria-label="Settings">${ic('biggear')}</button>`);
def('fx-taskbar',`:host{display:grid;grid-template-columns:482px auto 1fr;height:60px;background:#1c1c1c;color:#fff;font:14px/20px "Open Sans",sans-serif;border-top:1px solid #444}
.w,.c,.r{display:flex;align-items:center}.w{padding:0 0 2px 23px}.w span{color:#c4c4c4}.w b{font-weight:400;color:#fff}
.c button{width:50px;height:50px;margin-right:5px;position:relative}.c .on{background:#2a2a2a;border-radius:5px;box-shadow:inset 0 0 0 1px #383838}.on::after,.run::after{content:"";position:absolute;bottom:1px;width:20px;height:4px;border-radius:2px;background:#4cc2ff}.run::after{width:8px;background:#999}
label{display:flex;align-items:center;width:275px;height:40px;margin:0 5px 0 2px;border-radius:20px;background:#3b3b3b;border:1px solid #505050;padding:0 10px 0 14px;gap:12px}input{flex:1;min-width:0;font-size:16px}input::placeholder{color:#ccc;opacity:1}
.r{justify-content:flex-end;padding:0 23px 2px 0;text-align:center}.t{text-align:right;margin:0 10px 0 23px}.q{display:flex;gap:10px}.l{margin:0 23px 0 24px}.ch{margin-right:19px}.bl{margin-right:21px}`,
 `<div class="w">${ic('moon')}<div><b>90°F</b><br><span>Clear</span></div></div><div class="c"><button aria-label="Start">${ic('win')}</button><label>${ic('search')}<input type="text" placeholder="Search" aria-label="Search">${ic('donkey')}</label>${['task','teams','files','edge','store','hp','mcafee','whats','code','spot','fus'].map(n=>`<button class="${n==='fus'?'on':n==='spot'?'run':''}" aria-label="${n}">${ic(n)}</button>`).join('')}</div>
 <div class="r"><button class="ch" aria-label="Hidden icons">${ic('chev')}</button>${ic('cloud')}<div class="l">ENG<br>IN</div><div class="q">${ic('wifi')}${ic('vol')}${ic('batt')}</div><div class="t">20:42<br>08-05-2024</div><button class="bl" aria-label="Notifications">${ic('tbell')}</button>${ic('pilot')}</div>`);
def('fx-app',':host{display:flex;flex-direction:column}','<fx-titlebar></fx-titlebar><fx-tabbar></fx-tabbar><fx-ribbon></fx-ribbon><fx-stage></fx-stage><fx-timeline></fx-timeline><fx-taskbar></fx-taskbar>');
</script>
</body>
</html>
